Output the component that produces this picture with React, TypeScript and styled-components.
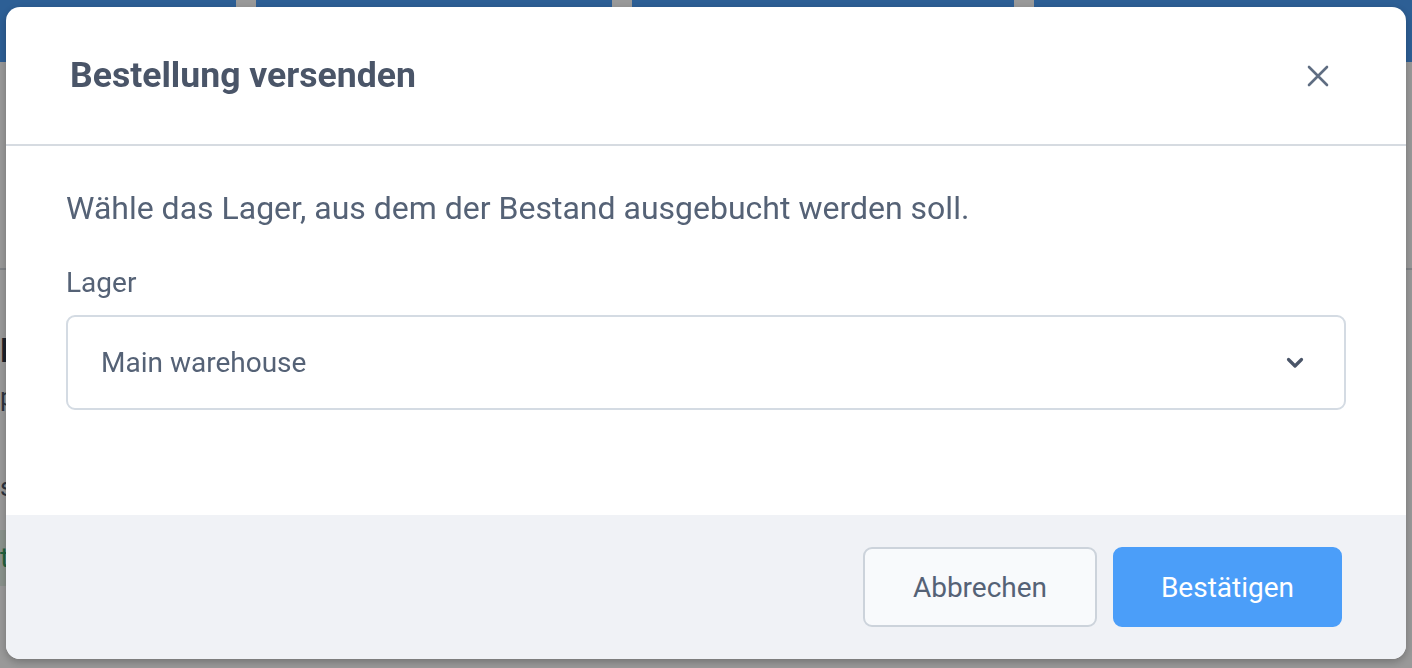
import React from 'react';
import styled, { createGlobalStyle } from 'styled-components';

const GlobalStyle = createGlobalStyle`
  html, body {
    margin: 0;
    padding: 0;
    width: 100%;
    height: 100%;
    overflow: hidden;
    font-family: Roboto, "Liberation Sans", Arial, sans-serif;
  }
  #root {
    height: 100%;
  }
`;

// page behind the dialog
const Page = styled.div`
  height: 100%;
  background: #ffffff;
  display: flex;
  flex-direction: column;
`;

const TopStrip = styled.div`
  height: 7px;
  display: flex;
  background: #4b9ef9;
`;

const TabGap = styled.div<{ $left: number }>`
  width: 20px;
  margin-left: ${(p) => p.$left}px;
  background: #ffffff;
`;

const TopBar = styled.div`
  height: 55px;
  background: #4b9ef9;
`;

const PageSection = styled.div`
  height: 206px;
  border-bottom: 2px solid #d6dbe1;
`;

const PageContent = styled.div`
  padding: 60px 0 0 0;
  display: flex;
  flex-direction: column;
  color: #2d3748;
`;

const PageHeading = styled.div`
  font-size: 34px;
  font-weight: 700;
  line-height: 40px;
`;

const PageSub = styled.div<{ $gap: number }>`
  margin-top: ${(p) => p.$gap}px;
  font-size: 26px;
  line-height: 30px;
  color: #4a5568;
`;

const Badge = styled.div`
  margin-top: 28px;
  width: 120px;
  height: 56px;
  background: #e6f4ea;
  color: #38a169;
  font-size: 28px;
  line-height: 56px;
`;

// overlay + dialog
const Overlay = styled.div`
  position: fixed;
  inset: 0;
  background: rgba(0, 0, 0, 0.4);
  display: flex;
  align-items: flex-start;
  justify-content: center;
  padding-top: 7px;
`;

const Dialog = styled.div`
  width: 1400px;
  height: 652px;
  background: #ffffff;
  border-radius: 14px;
  box-shadow: 0 3px 8px rgba(0, 0, 0, 0.25);
  display: flex;
  flex-direction: column;
  overflow: hidden;
`;

const Header = styled.div`
  height: 139px;
  box-sizing: border-box;
  border-bottom: 2px solid #d6dbe1;
  display: flex;
  align-items: center;
  justify-content: space-between;
  padding: 0 76px 0 64px;
`;

const Title = styled.h2`
  margin: 0;
  font-size: 35.6px;
  font-weight: 700;
  color: #4a5568;
  padding-bottom: 2px;
`;

const CloseButton = styled.button`
  background: none;
  border: none;
  padding: 0;
  width: 24px;
  height: 24px;
  display: flex;
  align-items: center;
  justify-content: center;
  cursor: pointer;
`;

const Body = styled.div`
  flex: 1;
  padding: 44px 60px 0 60px;
  display: flex;
  flex-direction: column;
`;

const Intro = styled.p`
  margin: 0;
  font-size: 32px;
  line-height: 36px;
  color: #556276;
`;

const Label = styled.label`
  margin-top: 41px;
  font-size: 28px;
  line-height: 32px;
  color: #556276;
`;

const Select = styled.div`
  margin-top: 16px;
  height: 95px;
  box-sizing: border-box;
  border: 2px solid #d4dbe3;
  border-radius: 9px;
  display: flex;
  align-items: center;
  justify-content: space-between;
  padding: 0 40px 0 33px;
  font-size: 28px;
  color: #556276;
`;

const Footer = styled.div`
  height: 144px;
  background: #f0f2f6;
  display: flex;
  align-items: flex-start;
  justify-content: flex-end;
  gap: 16px;
  padding: 32px 64px 0 0;
  box-sizing: border-box;
`;

const Button = styled.button<{ $primary?: boolean }>`
  height: 80px;
  width: ${(p) => (p.$primary ? 229 : 234)}px;
  box-sizing: border-box;
  border-radius: 9px;
  border: 2px solid ${(p) => (p.$primary ? '#4b9ef9' : '#ccd3db')};
  background: ${(p) => (p.$primary ? '#4b9ef9' : '#f8fafc')};
  color: ${(p) => (p.$primary ? '#ffffff' : '#556276')};
  font-family: Roboto, "Liberation Sans", Arial, sans-serif;
  font-size: 28px;
  cursor: pointer;
`;

const App: React.FC = () => {
  return (
    <>
      <GlobalStyle />
      <Page>
        <TopStrip>
          <TabGap $left={236} />
          <TabGap $left={356} />
          <TabGap $left={382} />
        </TopStrip>
        <TopBar />
        <PageSection />
        <PageContent>
          <PageHeading>F</PageHeading>
          <PageSub $gap={12}>p.</PageSub>
          <PageSub $gap={60}>s</PageSub>
          <Badge>t</Badge>
        </PageContent>
      </Page>

      <Overlay>
        <Dialog>
          <Header>
            <Title>Bestellung versenden</Title>
            <CloseButton aria-label="Schließen">
              <svg width="22" height="22" viewBox="0 0 22 22" fill="none">
                <path d="M2 2L20 20M20 2L2 20" stroke="#5f6d82" strokeWidth="2.6" strokeLinecap="round" />
              </svg>
            </CloseButton>
          </Header>

          <Body>
            <Intro>Wähle das Lager, aus dem der Bestand ausgebucht werden soll.</Intro>
            <Label>Lager</Label>
            <Select>
              <span>Main warehouse</span>
              <svg width="18" height="12" viewBox="0 0 18 12" fill="none">
                <path d="M2.5 2.5L9 9L15.5 2.5" stroke="#4a5568" strokeWidth="3.2" strokeLinecap="round" strokeLinejoin="round" />
              </svg>
            </Select>
          </Body>

          <Footer>
            <Button>Abbrechen</Button>
            <Button $primary>Bestätigen</Button>
          </Footer>
        </Dialog>
      </Overlay>
    </>
  );
};

export default App;
